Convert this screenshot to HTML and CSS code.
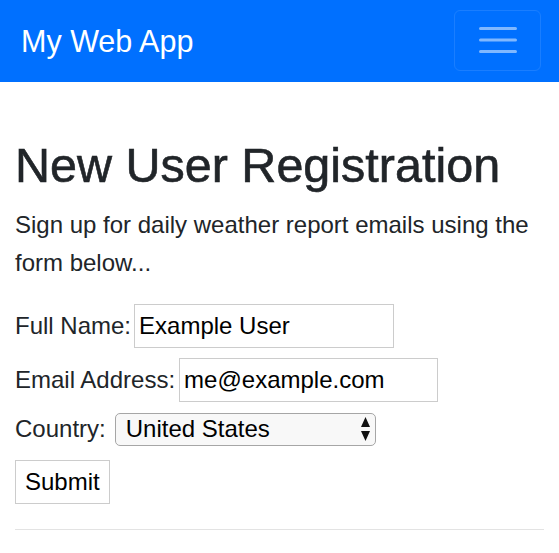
FILE: index.html
```html
<!DOCTYPE html>
<html lang="en">
<head>
<meta charset="utf-8">
<title>My Web App</title>
<link rel="stylesheet" href="styles.css">
</head>
<body>
<nav class="navbar">
  <a class="brand" href="#">My Web App</a>
  <button class="toggler" type="button" aria-label="Toggle navigation">
    <svg class="toggler-icon" width="38" height="28" viewBox="0 0 38 28">
      <path d="M1.5 2.5H36.5M1.5 14H36.5M1.5 25.5H36.5" stroke="rgba(255,255,255,0.5)" stroke-width="3" stroke-linecap="round"/>
    </svg>
  </button>
</nav>
<main class="container">
  <h1 class="title">New User Registration</h1>
  <p class="lead">Sign up for daily weather report emails using the form below...</p>
  <form class="form">
    <div class="row row-name">
      <label for="name">Full Name:</label>
      <input id="name" class="field" type="text" value="Example User">
    </div>
    <div class="row row-email">
      <label for="email">Email Address:</label>
      <input id="email" class="field" type="email" value="me@example.com">
    </div>
    <div class="row row-country">
      <label for="country">Country:</label>
      <div class="select">
        <span class="select-value">United States</span>
        <svg class="select-arrows" width="9" height="24" viewBox="0 0 9 24">
          <path d="M4.5 0L9 10H0Z M0 14H9L4.5 24Z" fill="#111"/>
        </svg>
      </div>
    </div>
    <div class="row row-submit">
      <button class="submit" type="button">Submit</button>
    </div>
  </form>
  <hr class="rule">
</main>
</body>
</html>
```

FILE: styles.css
```css
html, body {
  margin: 0;
  padding: 0;
  background: #ffffff;
}

body {
  font-family: "Liberation Sans", Arial, sans-serif;
  color: #212529;
  font-size: 24px;
  line-height: 38px;
}

.navbar {
  height: 82px;
  background: #0070ff;
  display: flex;
  align-items: center;
  justify-content: space-between;
  padding: 0 18px 0 21px;
  box-sizing: border-box;
}

.brand {
  color: #ffffff;
  text-decoration: none;
  font-size: 30.5px;
  line-height: 36px;
}

.toggler {
  width: 87px;
  height: 61px;
  box-sizing: border-box;
  border: 1px solid rgba(255, 255, 255, 0.1);
  border-radius: 6px;
  background: transparent;
  display: flex;
  align-items: center;
  justify-content: center;
  padding: 0;
  margin-top: -2px;
}

.toggler-icon {
  display: block;
}

.container {
  padding: 0 15px;
}

.title {
  margin: 54px 0 0;
  font-size: 48.5px;
  line-height: 58px;
  font-weight: normal;
  -webkit-text-stroke: 0.6px #212529;
}

.lead {
  margin: 12px 0 0;
}

.form {
  display: flex;
  flex-direction: column;
  margin-top: 22px;
}

.row {
  display: flex;
  align-items: center;
  gap: 3px;
}

.row-email {
  margin-top: 10px;
}

.row-country {
  margin-top: 8px;
}

.row-country .select {
  margin-left: 6px;
}

.row-submit {
  margin-top: 12px;
}

label {
  color: #212529;
}

.field {
  width: 260px;
  height: 44px;
  box-sizing: border-box;
  border: 1px solid #cccccc;
  padding: 0 4px;
  margin: 0;
  font-family: "Liberation Sans", Arial, sans-serif;
  font-size: 24px;
  color: #000000;
  background: #ffffff;
  border-radius: 0;
  outline: none;
}

.row-email .field {
  width: 259px;
  margin-left: 1px;
}

.select {
  width: 261px;
  height: 33px;
  box-sizing: border-box;
  border: 1px solid #a6a6a6;
  border-radius: 5px;
  background: #f8f8f8;
  display: flex;
  align-items: center;
  justify-content: space-between;
  padding: 0 5px 0 10px;
  color: #000000;
  font-size: 24px;
}

.select-value {
  line-height: 30px;
}

.select-arrows {
  display: block;
}

.submit {
  height: 44px;
  box-sizing: border-box;
  padding: 0 9px;
  border: 1px solid #cccccc;
  background: #ffffff;
  color: #000000;
  font-family: "Liberation Sans", Arial, sans-serif;
  font-size: 24px;
  border-radius: 0;
}

.rule {
  margin: 25px 0 0;
  border: 0;
  border-top: 1px solid #e3e3e3;
}
```
